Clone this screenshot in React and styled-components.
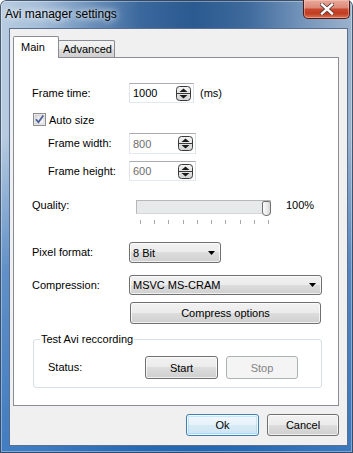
import React from 'react';
import styled, { createGlobalStyle } from 'styled-components';

const Global = createGlobalStyle`
  html, body { margin: 0; padding: 0; background: #ffffff; }
  body { font-family: "Liberation Sans", Arial, sans-serif; font-size: 11px; color: #000; }
  * { box-sizing: border-box; }
`;

const Window = styled.div`
  width: 353px;
  height: 453px;
  display: flex;
  flex-direction: column;
  border-radius: 6px 6px 0 0;
  overflow: hidden;
  background:
    linear-gradient(180deg, rgba(255,255,255,0) 0%, rgba(255,255,255,0) 30%, rgba(25,95,178,0.55) 60%, rgba(35,105,185,0.8) 100%),
    linear-gradient(90deg, #b9cde1 0%, #a2bcd8 12%, #6a90bb 26%, #3a679c 40%, #2b5a90 55%, #3e6a9c 70%, #7293b9 85%, #9cb3cd 100%);
  box-shadow: inset 0 0 0 1px rgba(30, 45, 70, 0.75), inset 0 0 0 2px rgba(255,255,255,0.35);
`;

const TitleBar = styled.div`
  height: 28px;
  flex: none;
  display: flex;
  align-items: flex-start;
  justify-content: space-between;
`;

const Title = styled.div`
  font-family: "Liberation Sans", Arial, sans-serif;
  font-size: 12px;
  line-height: 28px;
  height: 28px;
  padding-left: 5px;
  color: #000;
  text-shadow: 0 0 6px rgba(255,255,255,0.95), 0 0 10px rgba(255,255,255,0.8);
`;

const CloseButton = styled.div`
  width: 47px;
  height: 19px;
  margin-right: 3px;
  display: flex;
  align-items: center;
  justify-content: center;
  border: 1px solid #4d1a12;
  border-top: none;
  border-radius: 0 0 5px 5px;
  background: linear-gradient(180deg, #e9a99b 0%, #dc8a79 42%, #c8472e 52%, #c03d22 75%, #dc7252 100%);
  box-shadow: inset 0 0 0 1px rgba(255, 210, 200, 0.45);
`;

const Body = styled.div`
  flex: 1;
  display: flex;
  padding: 0 5px 7px 9px;
`;

const Client = styled.div`
  flex: 1;
  display: flex;
  flex-direction: column;
  background: #f0f0f0;
  border: 1px solid #5b7090;
  padding: 7px 8px 9px 3px;
`;

const TabStrip = styled.div`
  height: 21px;
  display: flex;
  align-items: flex-end;
`;

const Tab = styled.div`
  position: relative;
  width: ${p => p.$w}px;
  height: ${p => (p.$active ? 22 : 17)}px;
  margin-bottom: ${p => (p.$active ? -1 : 0)}px;
  margin-left: ${p => (p.$active ? 0 : -1)}px;
  z-index: ${p => (p.$active ? 1 : 0)};
  border: 1px solid #898c95;
  border-bottom: none;
  border-radius: 2px 2px 0 0;
  padding: ${p => (p.$active ? '4px 0 0 7px' : '2px 0 0 4px')};
  line-height: 13px;
  font-size: 11px;
  background: ${p =>
    p.$active
      ? '#ffffff'
      : 'linear-gradient(180deg, #f3f3f3 0%, #ebebeb 50%, #dddddd 50%, #cfcfcf 100%)'};
`;

const Panel = styled.div`
  background: #ffffff;
  border: 1px solid #898c95;
  display: flex;
  flex-direction: column;
  padding: 0 16px 17px 18px;
`;

const Row = styled.div`
  display: flex;
  align-items: center;
  height: ${p => p.$h}px;
  margin-top: ${p => p.$mt}px;
`;

const Label = styled.div`
  width: ${p => (p.$indent ? 81 : 97)}px;
  margin-left: ${p => (p.$indent ? 16 : 0)}px;
  flex: none;
  line-height: 13px;
  white-space: nowrap;
`;

const SpinBox = styled.div`
  width: ${p => p.$w}px;
  height: 100%;
  display: flex;
  align-items: center;
  justify-content: space-between;
  padding: 0 2px 0 3px;
  background: #fff;
  border: 1px solid;
  border-color: #abadb3 #dbdfe6 #e3e9ef #e2e3ea;
  color: ${p => (p.$disabled ? '#6d6d6d' : '#000')};
`;

const Unit = styled.span`
  margin-left: 6px;
`;

const CheckRow = styled.label`
  display: flex;
  align-items: center;
  gap: 3px;
  margin-left: 1px;
`;

const SliderWrap = styled.div`
  display: flex;
  flex-direction: column;
  margin-left: 7px;
  width: 135px;
`;

const Track = styled.div`
  position: relative;
  height: 14px;
  background: #e7eaea;
  border: 1px solid #d6d6d6;
  border-top-color: #b7b7b7;
  border-left-color: #b7b7b7;
`;

const Thumb = styled.div`
  position: absolute;
  right: -1px;
  top: 0;
  width: 9px;
  height: 15px;
  border: 1px solid #707070;
  border-radius: 2px 2px 4px 4px;
  background: linear-gradient(90deg, #fbfbfb 0%, #e9e9e9 60%, #d6d6d6 100%);
`;

const Ticks = styled.div`
  display: flex;
  justify-content: space-between;
  width: 129px;
  margin: 6px 0 0 4px;
  height: 4px;
`;

const Tick = styled.span`
  width: 1px;
  height: 4px;
  background: #a8a8a8;
`;

const QualityRow = styled.div`
  display: flex;
  align-items: flex-start;
  margin-top: 19px;
  height: 24px;
`;

const TopLabel = styled.div`
  width: 97px;
  flex: none;
  line-height: 10px;
`;

const Percent = styled.div`
  margin-left: 15px;
  line-height: 10px;
`;

const Combo = styled.div`
  width: ${p => (p.$w ? `${p.$w}px` : 'auto')};
  flex: ${p => (p.$w ? 'none' : '1')};
  height: 100%;
  display: flex;
  align-items: center;
  justify-content: space-between;
  padding: 0 5px 0 3px;
  border: 1px solid #707070;
  border-radius: 3px;
  background: linear-gradient(180deg, #f2f2f2 0%, #ebebeb 50%, #dddddd 50%, #cfcfcf 100%);
  box-shadow: inset 0 0 0 1px rgba(255,255,255,0.7);
`;

const Button = styled.div`
  width: ${p => (p.$w ? `${p.$w}px` : 'auto')};
  flex: ${p => (p.$w ? 'none' : '1')};
  height: ${p => p.$h || 23}px;
  margin: ${p => p.$m || '0'};
  display: flex;
  align-items: center;
  justify-content: center;
  border-radius: 3px;
  font-size: 11px;
  border: 1px solid ${p => (p.$disabled ? '#adb2b5' : p.$default ? '#3c7fb1' : '#707070')};
  color: ${p => (p.$disabled ? '#838383' : '#000')};
  background: ${p =>
    p.$disabled
      ? '#f4f4f4'
      : p.$default
      ? 'linear-gradient(180deg, #f1f8fc 0%, #e6f2f9 50%, #d7eaf6 50%, #cfe5f4 100%)'
      : 'linear-gradient(180deg, #f2f2f2 0%, #ebebeb 50%, #dddddd 50%, #cfcfcf 100%)'};
  box-shadow: ${p =>
    p.$disabled
      ? 'none'
      : p.$default
      ? 'inset 0 0 0 1px rgba(255,255,255,0.8), inset 0 0 0 2px rgba(110,190,235,0.3)'
      : 'inset 0 0 0 1px rgba(255,255,255,0.7)'};
`;

const GroupBox = styled.div`
  position: relative;
  margin-top: 15px;
  margin-left: 1px;
  height: 49px;
  border: 1px solid #d5dfe5;
  border-radius: 3px;
  padding: 16px 0 0 14px;
  display: flex;
  align-items: flex-start;
`;

const GroupCaption = styled.span`
  position: absolute;
  top: -7px;
  left: 6px;
  padding: 0 1px;
  background: #fff;
  line-height: 13px;
`;

const StatusLabel = styled.div`
  width: 97px;
  flex: none;
  line-height: 23px;
`;

const ButtonRow = styled.div`
  display: flex;
  justify-content: flex-end;
  gap: 8px;
  margin-top: 8px;
`;

const Spinner = () => (
  <svg width="15" height="15" viewBox="0 0 15 15">
    <defs>
      <linearGradient id="spg" x1="0" y1="0" x2="0" y2="1">
        <stop offset="0" stopColor="#f4f4f4" />
        <stop offset="1" stopColor="#d4d4d4" />
      </linearGradient>
    </defs>
    <rect x="0.5" y="0.5" width="14" height="14" rx="3" fill="url(#spg)" stroke="#3a3a3a" />
    <line x1="1" y1="7.5" x2="14" y2="7.5" stroke="#3a3a3a" />
    <polygon points="3.5,6 7.5,2.5 11.5,6" fill="#1a1a1a" />
    <polygon points="3.5,9 11.5,9 7.5,12.5" fill="#1a1a1a" />
  </svg>
);

const Arrow = () => (
  <svg width="7" height="4" viewBox="0 0 7 4">
    <polygon points="0,0 7,0 3.5,4" fill="#000" />
  </svg>
);

const CheckBox = () => (
  <svg width="13" height="13" viewBox="0 0 13 13">
    <defs>
      <linearGradient id="cbg" x1="0" y1="0" x2="1" y2="1">
        <stop offset="0" stopColor="#dcdcdc" />
        <stop offset="1" stopColor="#fbfbfb" />
      </linearGradient>
    </defs>
    <rect x="0.5" y="0.5" width="12" height="12" fill="#f4f4f4" stroke="#8e8f8f" />
    <rect x="2" y="2" width="9" height="9" fill="url(#cbg)" stroke="#c0c0c0" strokeWidth="0.6" />
    <path d="M3 6.3 L5.4 9.3 L10.3 2.6" fill="none" stroke="#4a5e96" strokeWidth="1.7" />
  </svg>
);

const CloseX = () => (
  <svg width="14" height="12" viewBox="0 0 14 12">
    <path d="M2 1.5 L12 10.5 M12 1.5 L2 10.5" stroke="#5a3a36" strokeWidth="4" strokeLinecap="square" />
    <path d="M2 1.5 L12 10.5 M12 1.5 L2 10.5" stroke="#ffffff" strokeWidth="2.4" strokeLinecap="square" />
  </svg>
);

export default function App() {
  return (
    <>
      <Global />
      <Window>
        <TitleBar>
          <Title>Avi manager settings</Title>
          <CloseButton>
            <CloseX />
          </CloseButton>
        </TitleBar>
        <Body>
          <Client>
            <TabStrip>
              <Tab $active $w={46}>Main</Tab>
              <Tab $w={57}>Advanced</Tab>
            </TabStrip>
            <Panel>
              <Row $h={20} $mt={25}>
                <Label>Frame time:</Label>
                <SpinBox $w={65}>
                  <span>1000</span>
                  <Spinner />
                </SpinBox>
                <Unit>(ms)</Unit>
              </Row>
              <Row $h={13} $mt={10}>
                <CheckRow>
                  <CheckBox />
                  <span>Auto size</span>
                </CheckRow>
              </Row>
              <Row $h={21} $mt={7}>
                <Label $indent>Frame width:</Label>
                <SpinBox $w={67} $disabled>
                  <span>800</span>
                  <Spinner />
                </SpinBox>
              </Row>
              <Row $h={20} $mt={7}>
                <Label $indent>Frame height:</Label>
                <SpinBox $w={67} $disabled>
                  <span>600</span>
                  <Spinner />
                </SpinBox>
              </Row>
              <QualityRow>
                <TopLabel>Quality:</TopLabel>
                <SliderWrap>
                  <Track>
                    <Thumb />
                  </Track>
                  <Ticks>
                    {Array.from({ length: 10 }).map((_, i) => (
                      <Tick key={i} />
                    ))}
                  </Ticks>
                </SliderWrap>
                <Percent>100%</Percent>
              </QualityRow>
              <Row $h={21} $mt={18}>
                <Label>Pixel format:</Label>
                <Combo $w={92}>
                  <span>8 Bit</span>
                  <Arrow />
                </Combo>
              </Row>
              <Row $h={20} $mt={12}>
                <Label>Compression:</Label>
                <Combo>
                  <span>MSVC MS-CRAM</span>
                  <Arrow />
                </Combo>
              </Row>
              <Row $h={22} $mt={7}>
                <Label />
                <Button $h={22} $m="0 1px">Compress options</Button>
              </Row>
              <GroupBox>
                <GroupCaption>Test Avi reccording</GroupCaption>
                <StatusLabel>Status:</StatusLabel>
                <Button $w={73}>Start</Button>
                <Button $w={72} $m="0 0 0 8px" $disabled>Stop</Button>
              </GroupBox>
            </Panel>
            <ButtonRow>
              <Button $w={73} $h={22} $default>Ok</Button>
              <Button $w={72} $h={22}>Cancel</Button>
            </ButtonRow>
          </Client>
        </Body>
      </Window>
    </>
  );
}
